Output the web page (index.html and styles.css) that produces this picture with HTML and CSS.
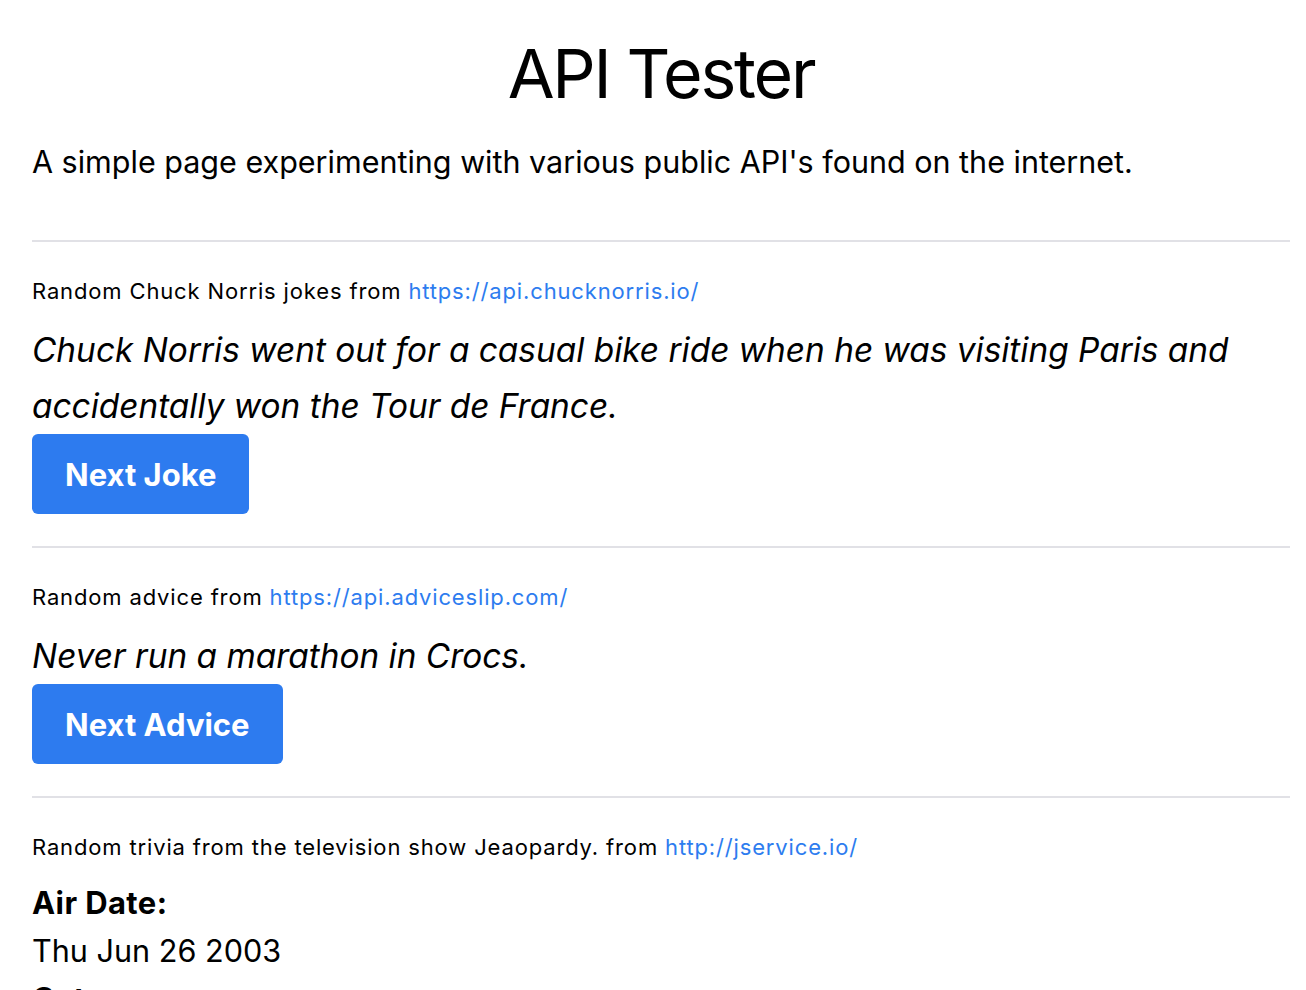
FILE: index.html
```html
<!DOCTYPE html>
<html lang="en">
<head>
<meta charset="utf-8">
<title>API Tester</title>
<link rel="stylesheet" href="styles.css">
</head>
<body>
<main class="page">
  <h1 class="title">API Tester</h1>
  <p class="intro">A simple page experimenting with various public API's found on the internet.</p>

  <section class="block">
    <hr class="divider">
    <p class="source">Random Chuck Norris jokes from <a class="link" href="#">https://api.chucknorris.io/</a></p>
    <p class="quote">Chuck Norris went out for a casual bike ride when he was visiting Paris and accidentally won the Tour de France.</p>
    <button class="btn" type="button">Next Joke</button>
  </section>

  <section class="block">
    <hr class="divider">
    <p class="source">Random advice from <a class="link" href="#">https://api.adviceslip.com/</a></p>
    <p class="quote">Never run a marathon in Crocs.</p>
    <button class="btn" type="button">Next Advice</button>
  </section>

  <section class="block">
    <hr class="divider">
    <p class="source">Random trivia from the television show Jeaopardy. from <a class="link" href="#">http://jservice.io/</a></p>
    <dl class="trivia">
      <dt class="trivia-label">Air Date:</dt>
      <dd class="trivia-value">Thu Jun 26 2003</dd>
      <dt class="trivia-label">Category:</dt>
      <dd class="trivia-value">Science</dd>
    </dl>
  </section>
</main>
</body>
</html>
```

FILE: styles.css
```css
html, body {
  margin: 0;
  padding: 0;
  background: #ffffff;
}

body {
  font-family: Inter, "Noto Sans", "Liberation Sans", sans-serif;
  color: #000000;
}

.page {
  padding: 29px 16px 0 32px;
}

.title {
  margin: 0;
  font-size: 68px;
  line-height: 88px;
  font-weight: 400;
  letter-spacing: -2.2px;
  text-align: center;
}

.intro {
  margin: 22px 0 0;
  font-size: 30.5px;
  line-height: 45px;
}

.block {
  margin-top: 56px;
}

.block + .block {
  margin-top: 32px;
}

.divider {
  margin: 0;
  height: 0;
  border: 0;
  border-top: 2px solid #e1e1e6;
}

.source {
  margin: 33px 0 0;
  font-size: 22px;
  line-height: 33px;
  letter-spacing: 0.85px;
}

.link {
  color: #2d7cef;
  text-decoration: none;
}

.quote {
  margin: 14px 0 0;
  font-size: 33.4px;
  line-height: 56px;
  font-style: italic;
}

.btn {
  display: block;
  height: 80px;
  padding: 0 33px;
  border: 0;
  border-radius: 6px;
  background: #2d7bef;
  color: #ffffff;
  font-family: inherit;
  font-size: 31px;
  font-weight: 700;
}

.trivia {
  margin: 15px 0 0;
}

.trivia-label {
  font-size: 31px;
  line-height: 48px;
  font-weight: 700;
  letter-spacing: 0.4px;
}

.trivia-value {
  margin: 0;
  font-size: 30.6px;
  line-height: 48px;
}
```
